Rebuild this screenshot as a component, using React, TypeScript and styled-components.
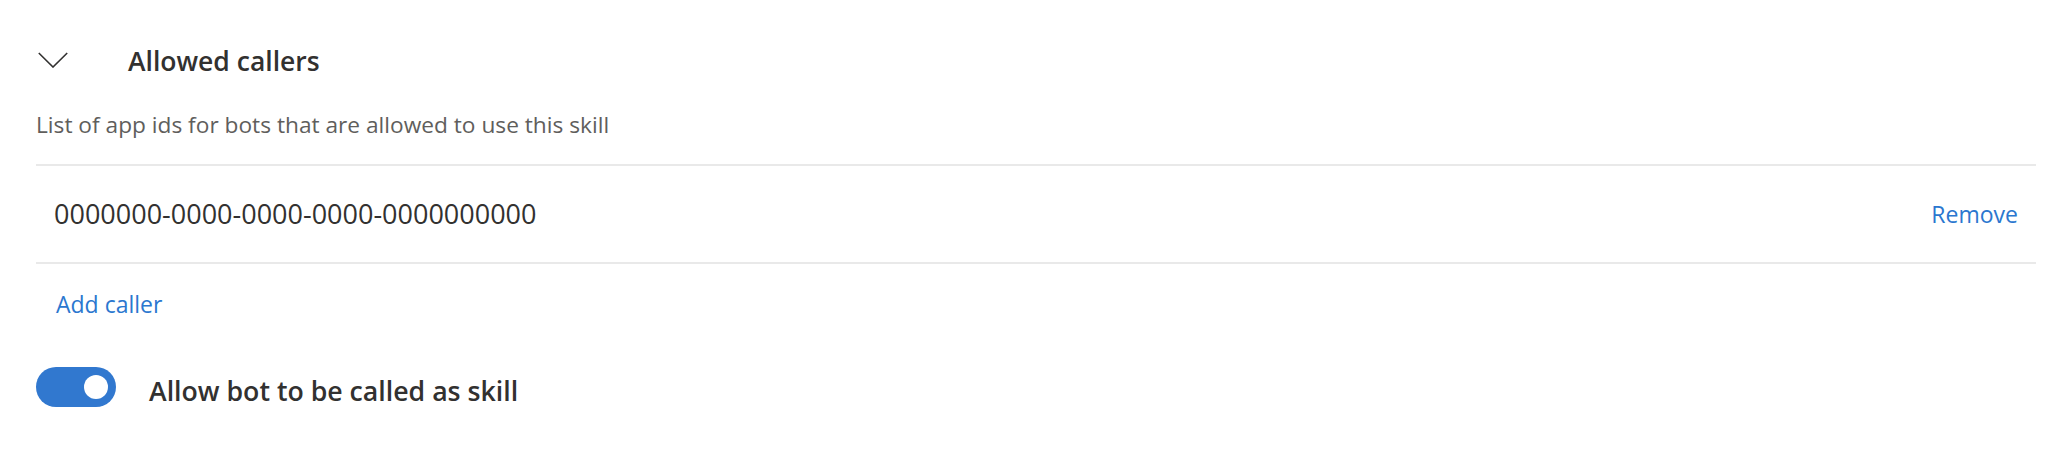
import React, { useState } from "react";
import styled, { createGlobalStyle } from "styled-components";

const GlobalStyle = createGlobalStyle`
  html, body {
    margin: 0;
    padding: 0;
    background: #ffffff;
  }
  body {
    font-family: "Open Sans", "Noto Sans", "Liberation Sans", sans-serif;
    color: #323130;
  }
`;

const Page = styled.div`
  padding: 41px 28px 40px 36px;
  display: flex;
  flex-direction: column;
`;

const Header = styled.button`
  display: flex;
  align-items: center;
  height: 40px;
  padding: 0 0 0 2px;
  border: none;
  background: transparent;
  cursor: pointer;
  font-family: inherit;
  text-align: left;
`;

const Chevron = styled.svg`
  width: 30px;
  height: 16px;
  flex: none;
  margin-top: -2px;
`;

const Title = styled.span`
  margin-left: 60px;
  font-size: 26.5px;
  font-weight: 600;
  color: #323130;
  line-height: 40px;
`;

const Description = styled.p`
  margin: 29px 0 0 0;
  font-size: 22.7px;
  line-height: 30px;
  color: #605e5c;
`;

const List = styled.div`
  margin-top: 24px;
  display: flex;
  flex-direction: column;
`;

const Row = styled.div`
  display: flex;
  align-items: center;
  justify-content: space-between;
  height: 96px;
  border-top: 2px solid #e9e9e9;
  border-bottom: 2px solid #e9e9e9;
  padding: 0 18px 0 18px;
`;

const CallerId = styled.span`
  font-size: 27px;
  color: #323130;
  line-height: 36px;
`;

const LinkButton = styled.button`
  border: none;
  background: transparent;
  padding: 0;
  cursor: pointer;
  font-family: inherit;
  font-size: 23px;
  line-height: 32px;
  color: #2b77cf;
`;

const AddRow = styled.div`
  padding: 24px 0 0 20px;
`;

const ToggleRow = styled.label`
  display: flex;
  align-items: center;
  margin-top: 45px;
  cursor: pointer;
`;

const Track = styled.span<{ $on: boolean }>`
  display: flex;
  align-items: center;
  justify-content: ${(p) => (p.$on ? "flex-end" : "flex-start")};
  width: 80px;
  height: 40px;
  box-sizing: border-box;
  padding: 0 8px;
  border-radius: 20px;
  background: ${(p) => (p.$on ? "#3178cf" : "#ffffff")};
  border: ${(p) => (p.$on ? "none" : "2px solid #605e5c")};
  flex: none;
`;

const Knob = styled.span<{ $on: boolean }>`
  width: 24px;
  height: 24px;
  border-radius: 50%;
  background: ${(p) => (p.$on ? "#ffffff" : "#605e5c")};
`;

const ToggleLabel = styled.span`
  margin-left: 33px;
  margin-top: 8px;
  font-size: 26.7px;
  font-weight: 600;
  color: #323130;
  line-height: 36px;
`;

export default function App() {
  const [on, setOn] = useState(true);
  return (
    <>
      <GlobalStyle />
      <Page>
        <Header type="button" aria-expanded="true">
          <Chevron viewBox="0 0 30 16" aria-hidden="true">
            <polyline
              points="0.8,1 15,15 29.2,1"
              fill="none"
              stroke="#323130"
              strokeWidth="1.6"
            />
          </Chevron>
          <Title>Allowed callers</Title>
        </Header>
        <Description>
          List of app ids for bots that are allowed to use this skill
        </Description>
        <List>
          <Row>
            <CallerId>0000000-0000-0000-0000-0000000000</CallerId>
            <LinkButton type="button">Remove</LinkButton>
          </Row>
        </List>
        <AddRow>
          <LinkButton type="button">Add caller</LinkButton>
        </AddRow>
        <ToggleRow onClick={() => setOn(!on)}>
          <Track $on={on}>
            <Knob $on={on} />
          </Track>
          <ToggleLabel>Allow bot to be called as skill</ToggleLabel>
        </ToggleRow>
      </Page>
    </>
  );
}
